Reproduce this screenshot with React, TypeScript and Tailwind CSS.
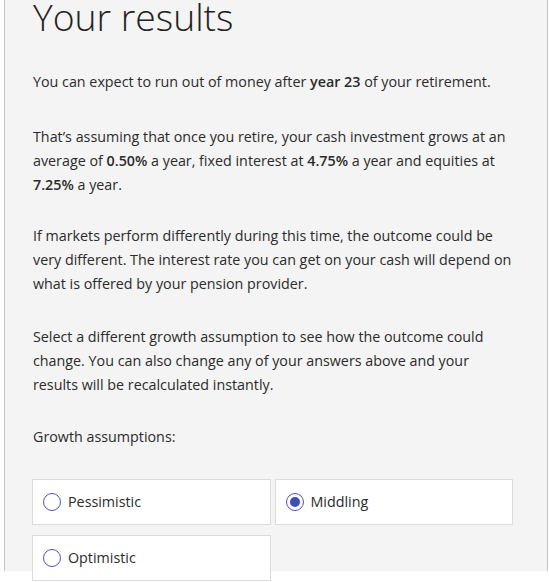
const options = [
  { label: 'Pessimistic', checked: false },
  { label: 'Middling', checked: true },
  { label: 'Optimistic', checked: false },
];

function Radio({ checked }: { checked: boolean }) {
  return (
    <span className="flex h-[18px] w-[18px] shrink-0 items-center justify-center rounded-full border border-[#4a56c4] bg-white">
      {checked && <span className="h-[10px] w-[10px] rounded-full bg-[#3f4db8]" />}
    </span>
  );
}

export default function App() {
  return (
    <div className="h-[582px] overflow-hidden bg-white pl-[4px] font-['Open_Sans',sans-serif] text-[14.3px] leading-[24px] text-[#2b2b2b]">
      <div className="h-full w-[544px] border-x border-[#c4c4c4] bg-[#f4f4f4] pl-[28px] pr-[32px]">
        <h1 className="-mt-[11px] text-[37.3px] font-light leading-[56px] text-[#222]">Your results</h1>

        <p className="mt-[25px]">
          You can expect to run out of money after <b className="font-semibold">year 23</b> of your retirement.
        </p>

        <p className="mt-[31px]">
          That’s assuming that once you retire, your cash investment grows at an average of{' '}
          <b className="font-semibold">0.50%</b> a year, fixed interest at <b className="font-semibold">4.75%</b> a year and
          equities at <b className="font-semibold">7.25%</b> a year.
        </p>

        <p className="mt-[27px]">
          If markets perform differently during this time, the outcome could be very different. The interest rate you can
          get on your cash will depend on what is offered by your pension provider.
        </p>

        <p className="mt-[29px]">
          Select a different growth assumption to see how the outcome could change. You can also change any of your
          answers above and your results will be recalculated instantly.
        </p>

        <p className="mt-[28px]">Growth assumptions:</p>

        <div className="-ml-[1px] mt-[30px] grid w-[481px] grid-cols-2 gap-x-[4px] gap-y-[10px]">
          {options.map((o) => (
            <label
              key={o.label}
              className="flex h-[46px] cursor-pointer items-center gap-[7px] border border-[#dcdcdc] bg-white pl-[10px]"
            >
              <Radio checked={o.checked} />
              <span>{o.label}</span>
            </label>
          ))}
        </div>
      </div>
    </div>
  );
}
